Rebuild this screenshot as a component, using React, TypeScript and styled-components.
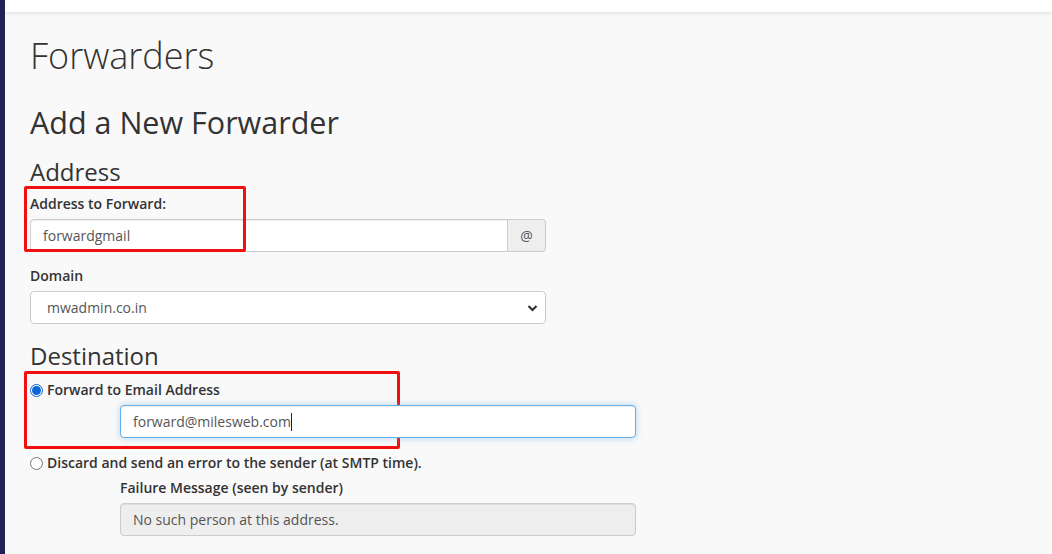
import React from "react";
import styled, { createGlobalStyle } from "styled-components";

const GlobalStyle = createGlobalStyle`
  html, body {
    margin: 0;
    padding: 0;
    background: #f9f9f9;
    font-family: "Open Sans", "Liberation Sans", sans-serif;
    color: #333;
    font-size: 14px;
  }
  * { box-sizing: border-box; }
`;

const Shell = styled.div`
  display: flex;
  min-height: 554px;
`;

const Sidebar = styled.div`
  width: 5px;
  flex-shrink: 0;
  background: #1e2254;
`;

const Main = styled.div`
  flex: 1;
  display: flex;
  flex-direction: column;
  overflow: hidden;
`;

const TopBar = styled.div`
  height: 12px;
  background: #fff;
  box-shadow: 0 1px 4px rgba(0, 0, 0, 0.12);
  position: relative;
  z-index: 1;
`;

const Content = styled.div`
  padding: 22px 25px 0;
`;

const PageTitle = styled.h1`
  margin: 0;
  font-size: 36px;
  font-weight: 300;
  line-height: 44px;
  color: #333;
`;

const SubTitle = styled.h2`
  margin: 26px 0 0;
  font-size: 30.5px;
  font-weight: 400;
  line-height: 36px;
  color: #333;
`;

const Section = styled.h3<{ $top?: number }>`
  margin: ${(p) => p.$top ?? 10}px 0 0;
  font-size: 24px;
  font-weight: 400;
  line-height: 30px;
  color: #333;
`;

const Label = styled.label`
  display: block;
  font-size: 14px;
  font-weight: 600;
  line-height: 20px;
  color: #333;
  margin-bottom: 5px;
`;

const Field = styled.div<{ $indent?: number; $width: number; $top?: number }>`
  position: relative;
  margin-left: ${(p) => p.$indent ?? 0}px;
  margin-top: ${(p) => p.$top ?? 0}px;
  width: ${(p) => p.$width}px;
`;

const Highlight = styled.div<{ $w: number; $h: number; $x: number; $y: number }>`
  position: absolute;
  left: ${(p) => p.$x}px;
  top: ${(p) => p.$y}px;
  width: ${(p) => p.$w}px;
  height: ${(p) => p.$h}px;
  border: 3px solid #f20f0f;
  border-radius: 2px;
  pointer-events: none;
`;

const InputGroup = styled.div`
  display: flex;
  width: 100%;
`;

const TextInput = styled.input<{ $focus?: boolean; $joined?: boolean }>`
  flex: 1;
  width: 100%;
  height: 33px;
  padding: 6px 12px;
  font-family: inherit;
  font-size: 14px;
  color: #555;
  background: #fff;
  border: 1px solid ${(p) => (p.$focus ? "#66afe9" : "#ccc")};
  border-radius: ${(p) => (p.$joined ? "4px 0 0 4px" : "4px")};
  box-shadow: ${(p) =>
    p.$focus
      ? "inset 0 1px 1px rgba(0,0,0,.075), 0 0 6px rgba(102,175,233,.5)"
      : "inset 0 1px 1px rgba(0,0,0,.075)"};
  outline: none;
  &:disabled {
    background: #eee;
    color: #555;
  }
`;

const TextCursor = styled.span`
  position: absolute;
  left: 171px;
  top: 8px;
  width: 1px;
  height: 18px;
  background: #222;
`;

const Addon = styled.span`
  width: 38px;
  height: 33px;
  display: flex;
  align-items: center;
  justify-content: center;
  background: #eee;
  border: 1px solid #ccc;
  border-left: none;
  border-radius: 0 4px 4px 0;
  color: #555;
  font-size: 14px;
`;

const Select = styled.div`
  height: 33px;
  display: flex;
  align-items: center;
  justify-content: space-between;
  padding: 0 7px 0 16px;
  background: #fff;
  border: 1px solid #ccc;
  border-radius: 4px;
  color: #555;
  font-size: 14px;
`;

const RadioRow = styled.label`
  display: flex;
  align-items: center;
  gap: 4px;
  font-size: 14px;
  font-weight: 600;
  line-height: 20px;
  color: #333;
`;

const Radio = styled.span<{ $checked?: boolean }>`
  width: 13px;
  height: 13px;
  border-radius: 50%;
  border: 1px solid ${(p) => (p.$checked ? "#0a66d9" : "#767676")};
  background: #fff;
  display: flex;
  align-items: center;
  justify-content: center;
  flex-shrink: 0;
  &::after {
    content: "";
    display: ${(p) => (p.$checked ? "block" : "none")};
    width: 9px;
    height: 9px;
    border-radius: 50%;
    background: #0a66d9;
  }
`;

const Caret = () => (
  <svg width="11" height="10" viewBox="0 0 11 10">
    <path d="M1.5 3 L5.5 7 L9.5 3" fill="none" stroke="#333" strokeWidth="2.2" />
  </svg>
);

export default function App() {
  return (
    <>
      <GlobalStyle />
      <Shell>
        <Sidebar />
        <Main>
          <TopBar />
          <Content>
            <PageTitle>Forwarders</PageTitle>
            <SubTitle>Add a New Forwarder</SubTitle>
            <Section $top={17}>Address</Section>

            <Field $width={516} $top={7}>
              <Highlight $x={-6} $y={-8} $w={222} $h={66} />
              <Label>Address to Forward:</Label>
              <InputGroup>
                <TextInput $joined defaultValue="forwardgmail" />
                <Addon>@</Addon>
              </InputGroup>
            </Field>

            <Field $width={516} $top={14}>
              <Label>Domain</Label>
              <Select>
                <span>mwadmin.co.in</span>
                <Caret />
              </Select>
            </Field>

            <Section $top={17}>Destination</Section>

            <Field $width={606} $top={9}>
              <Highlight $x={-6} $y={-9} $w={376} $h={78} />
              <RadioRow>
                <Radio $checked />
                Forward to Email Address
              </RadioRow>
              <Field $width={516} $indent={90} $top={5}>
                <TextInput $focus defaultValue="forward@milesweb.com" />
                <TextCursor />
              </Field>
            </Field>

            <Field $width={606} $top={15}>
              <RadioRow>
                <Radio />
                Discard and send an error to the sender (at SMTP time).
              </RadioRow>
              <Field $width={516} $indent={90} $top={5}>
                <Label>Failure Message (seen by sender)</Label>
                <TextInput disabled defaultValue="No such person at this address." />
              </Field>
            </Field>
          </Content>
        </Main>
      </Shell>
    </>
  );
}
